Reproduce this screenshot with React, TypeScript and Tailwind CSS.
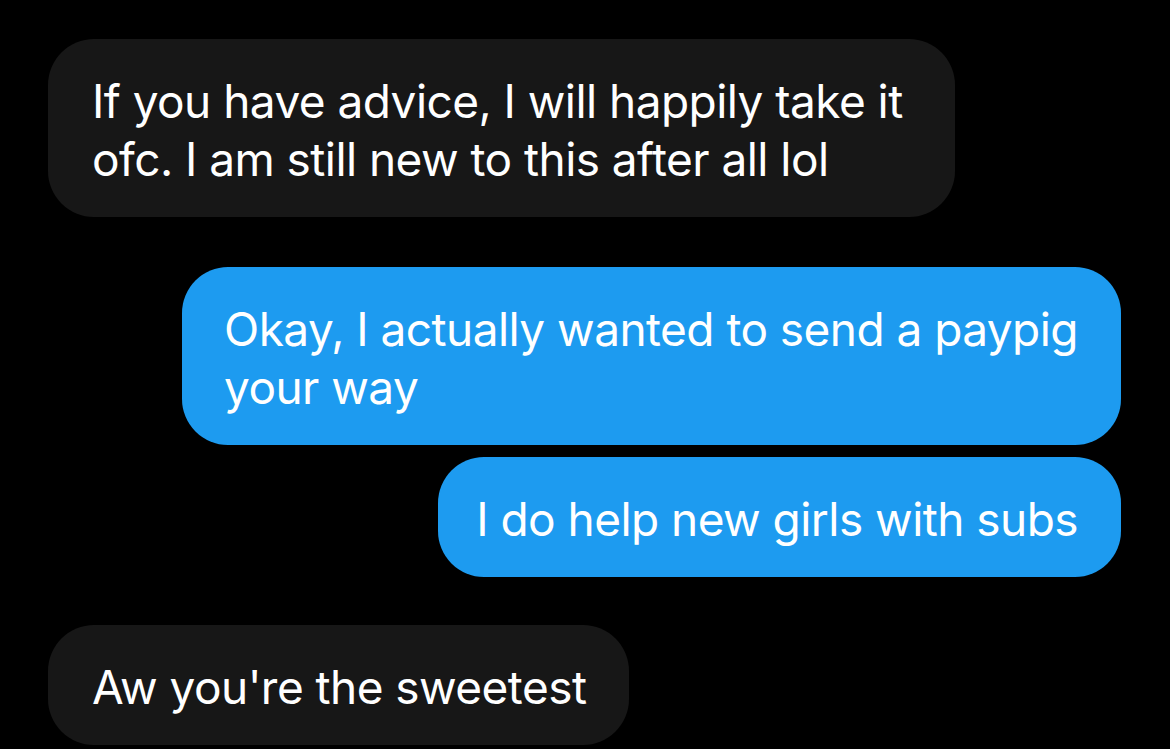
import React from 'react';

type Message = {
  id: number;
  lines: string[];
  mine: boolean;
  pad: string;
};

const MESSAGES: Message[] = [
  { id: 1, mine: false, pad: 'pl-[44px] pr-[52px]', lines: ['If you have advice, I will happily take it', 'ofc. I am still new to this after all lol'] },
  { id: 2, mine: true, pad: 'pl-[42px] pr-[43px]', lines: ['Okay, I actually wanted to send a paypig', 'your way'] },
  { id: 3, mine: true, pad: 'pl-[38px] pr-[43px]', lines: ['I do help new girls with subs'] },
  { id: 4, mine: false, pad: 'pl-[44px] pr-[43px]', lines: ["Aw you're the sweetest"] },
];

const Bubble: React.FC<{ message: Message }> = ({ message }) => (
  <div
    className={
      (message.mine
        ? 'self-end rounded-[46px] bg-[#1d9bf0] pt-[33px] pb-[29px] '
        : 'self-start rounded-[46px] bg-[#171717] pt-[33px] pb-[29px] ') + message.pad
    }
  >
    {message.lines.map((line, idx) => (
      <div key={idx} className="whitespace-nowrap text-[46px] leading-[58px] tracking-[-0.55px] text-white">
        {line}
      </div>
    ))}
  </div>
);

const App: React.FC = () => {
  return (
    <div
      className="flex h-[749px] w-[1170px] flex-col overflow-hidden bg-black pt-[39px] pl-[48px] pr-[49px]"
      style={{ fontFamily: 'Inter, "Noto Sans", sans-serif' }}
    >
      <Bubble message={MESSAGES[0]} />
      <div className="mt-[50px] flex flex-col gap-[12px]">
        <Bubble message={MESSAGES[1]} />
        <Bubble message={MESSAGES[2]} />
      </div>
      <div className="mt-[48px] flex flex-col">
        <Bubble message={MESSAGES[3]} />
      </div>
    </div>
  );
};

export default App;
